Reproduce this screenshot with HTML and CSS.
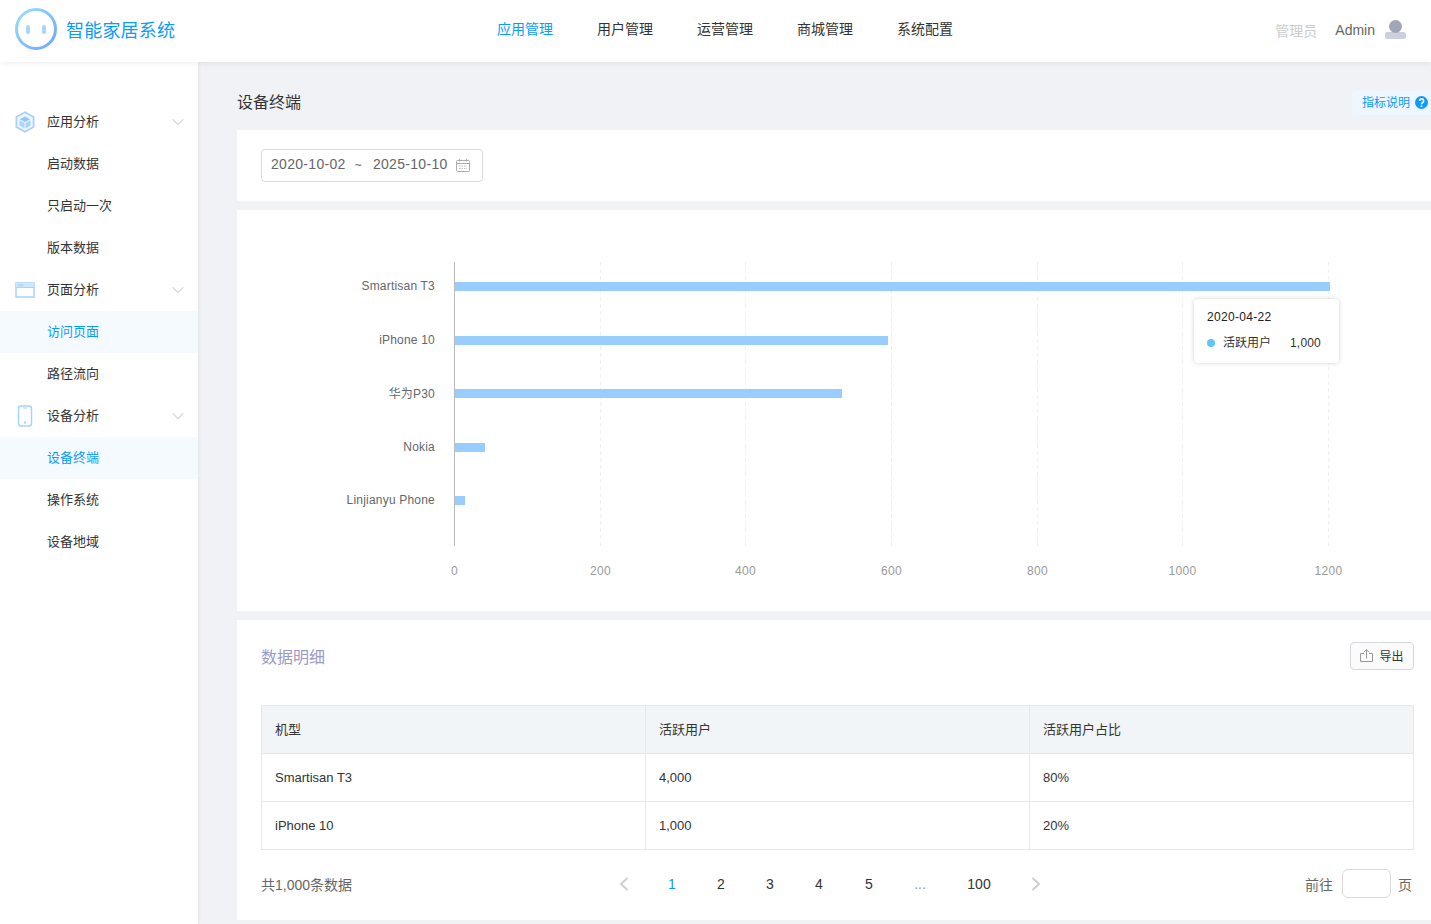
FILE: index.html
```html
<!DOCTYPE html>
<html lang="zh-CN">
<head>
<meta charset="utf-8">
<title>智能家居系统</title>
<link rel="stylesheet" href="styles.css">
</head>
<body>
<header class="topbar">
  <div class="brand">
    <svg class="brand-logo" width="44" height="44" viewBox="0 0 44 44">
      <defs><linearGradient id="lg" x1="0" y1="0" x2="1" y2="1"><stop offset="0" stop-color="#9be0ff"/><stop offset="1" stop-color="#6aa5ff"/></linearGradient></defs>
      <circle cx="22" cy="22" r="19.5" fill="none" stroke="url(#lg)" stroke-width="3"/>
      <rect x="12" y="18" width="4" height="9" rx="2" fill="#a5d6fb"/>
      <rect x="28" y="18" width="4" height="9" rx="2" fill="#a5d6fb"/>
    </svg>
    <span class="brand-name">智能家居系统</span>
  </div>
  <nav class="topnav">
    <a class="topnav-item is-active">应用管理</a>
    <a class="topnav-item">用户管理</a>
    <a class="topnav-item">运营管理</a>
    <a class="topnav-item">商城管理</a>
    <a class="topnav-item">系统配置</a>
  </nav>
  <div class="account">
    <span class="account-role">管理员</span>
    <span class="account-name">Admin</span>
    <svg width="22" height="22" viewBox="0 0 22 22"><rect x="0" y="13" width="21" height="7" rx="2.5" fill="#ccd0de"/><circle cx="10.500" cy="7.500" r="6.500" fill="#a1a5ba"/></svg>
  </div>
</header>
<div class="shell">
  <aside class="sidebar">
    <div class="menu-row menu-group">
      <svg class="menu-icon" width="20" height="22" viewBox="0 0 20 22"><path d="M10 1.2 18.6 6v10L10 20.8 1.400 16V6Z" fill="#eef6ff" stroke="#a6d2ff" stroke-width="1.800"/><path d="M10 5.500 15.200 8.300 10 11 4.800 8.300Z" fill="#8fc6ff"/><path d="M4.500 9.200 9.500 12v5.200L4.500 14.500ZM15.500 9.200 10.500 12v5.200l5-2.700Z" fill="#a9d4ff"/></svg>
      <span>应用分析</span>
      <svg class="chevron" width="12" height="8" viewBox="0 0 14 8"><path d="M1 1l6 6 6-6" fill="none" stroke="#d4d4d4" stroke-width="1.400"/></svg>
    </div>
    <div class="menu-row">启动数据</div>
    <div class="menu-row">只启动一次</div>
    <div class="menu-row">版本数据</div>
    <div class="menu-row menu-group">
      <svg class="menu-icon" width="20" height="16" viewBox="0 0 20 16"><rect x="1" y="1" width="18" height="14" fill="#fff" stroke="#a6d2ff" stroke-width="1.500"/><rect x="1" y="1" width="18" height="4" fill="#cfe6ff"/><path d="M1 5.500h18" stroke="#a6d2ff"/><rect x="3" y="2.500" width="5" height="1.500" fill="#a6d2ff"/></svg>
      <span>页面分析</span>
      <svg class="chevron" width="12" height="8" viewBox="0 0 14 8"><path d="M1 1l6 6 6-6" fill="none" stroke="#d4d4d4" stroke-width="1.400"/></svg>
    </div>
    <div class="menu-row is-active">访问页面</div>
    <div class="menu-row">路径流向</div>
    <div class="menu-row menu-group">
      <svg class="menu-icon" width="20" height="22" viewBox="0 0 20 22"><rect x="3.500" y="1" width="13" height="20" rx="2.500" fill="#fff" stroke="#a6d2ff" stroke-width="1.500"/><path d="M8 3h4" stroke="#a6d2ff"/><circle cx="10" cy="17.500" r="1.200" fill="#a6d2ff"/></svg>
      <span>设备分析</span>
      <svg class="chevron" width="12" height="8" viewBox="0 0 14 8"><path d="M1 1l6 6 6-6" fill="none" stroke="#d4d4d4" stroke-width="1.400"/></svg>
    </div>
    <div class="menu-row is-active">设备终端</div>
    <div class="menu-row">操作系统</div>
    <div class="menu-row">设备地域</div>
  </aside>
  <main class="content">
    <div class="page-head">
      <h1 class="page-title">设备终端</h1>
      <div class="hint">
        <span class="hint-text">指标说明</span>
        <svg width="13" height="13" viewBox="0 0 12 12"><circle cx="6" cy="6" r="6" fill="#0a9bff"/><path d="M4.200 4.600a1.900 1.900 0 1 1 2.700 1.700c-.6.300-.9.600-.9 1.200" fill="none" stroke="#fff" stroke-width="1.500"/><circle cx="6" cy="9.400" r=".9" fill="#fff"/></svg>
      </div>
    </div>
    <section class="card filter-card">
      <div class="date-range">
        <span>2020-10-02</span>
        <span class="date-sep">~</span>
        <span>2025-10-10</span>
        <svg class="date-icon" width="14" height="13" viewBox="0 0 14 13"><rect x=".5" y="1.500" width="13" height="11" rx="1" fill="none" stroke="#aaa"/><path d="M.5 4.500h13M3.500 0v2.500M10.500 0v2.500" stroke="#aaa"/><path d="M3 7h8M3 9.500h8" stroke="#bbb" stroke-dasharray="1.500 1"/></svg>
      </div>
    </section>
    <section class="card chart-card">
      <svg class="chart" width="1201" height="401" viewBox="0 0 1201 401">
        <g class="grid">
          <path d="M363.500 52v284M508.500 52v284M654.500 52v284M800.500 52v284M945.500 52v284M1091.500 52v284"/>
        </g>
        <path d="M217.500 52v284" stroke="#bbb" fill="none"/>
        <g class="bars">
          <rect x="218" y="72" width="875" height="9"/>
          <rect x="218" y="126" width="433" height="9"/>
          <rect x="218" y="179" width="387" height="9"/>
          <rect x="218" y="233" width="30" height="9"/>
          <rect x="218" y="286" width="10" height="9"/>
        </g>
        <g class="y-labels">
          <text x="198" y="80">Smartisan T3</text>
          <text x="198" y="134">iPhone 10</text>
          <text x="198" y="188">华为P30</text>
          <text x="198" y="241">Nokia</text>
          <text x="198" y="294">Linjianyu Phone</text>
        </g>
        <g class="x-labels">
          <text x="217.500" y="365">0</text>
          <text x="363.500" y="365">200</text>
          <text x="508.500" y="365">400</text>
          <text x="654.500" y="365">600</text>
          <text x="800.500" y="365">800</text>
          <text x="945.500" y="365">1000</text>
          <text x="1091.500" y="365">1200</text>
        </g>
      </svg>
      <div class="tooltip">
        <div class="tooltip-date">2020-04-22</div>
        <div class="tooltip-row">
          <i class="tooltip-dot"></i>
          <span>活跃用户</span>
          <span class="tooltip-value">1,000</span>
        </div>
      </div>
    </section>
    <section class="card table-card">
      <div class="table-head">
        <h2 class="table-title">数据明细</h2>
        <button class="export-btn">
          <svg width="13" height="13" viewBox="0 0 13 13"><path d="M4 4.500H.5v8h12v-8H9M6.500 9.500V.8M3.800 3.300 6.500.6l2.700 2.700" fill="none" stroke="#999"/></svg>
          <span>导出</span>
        </button>
      </div>
      <table class="data-table">
        <thead>
          <tr><th>机型</th><th>活跃用户</th><th>活跃用户占比</th></tr>
        </thead>
        <tbody>
          <tr><td>Smartisan T3</td><td>4,000</td><td>80%</td></tr>
          <tr><td>iPhone 10</td><td>1,000</td><td>20%</td></tr>
        </tbody>
      </table>
      <div class="table-foot">
        <span class="total">共1,000条数据</span>
        <div class="pager">
          <span class="pager-arrow"><svg width="10" height="14" viewBox="0 0 10 14"><path d="M8.500 1l-6.500 6 6.500 6" fill="none" stroke="#ccc" stroke-width="1.800"/></svg></span>
          <span class="pager-item is-active">1</span>
          <span class="pager-item">2</span>
          <span class="pager-item">3</span>
          <span class="pager-item">4</span>
          <span class="pager-item pager-five">5</span>
          <span class="pager-item pager-dots">...</span>
          <span class="pager-item pager-last">100</span>
          <span class="pager-arrow pager-next"><svg width="10" height="14" viewBox="0 0 10 14"><path d="M1.500 1l6.500 6-6.500 6" fill="none" stroke="#ccc" stroke-width="1.800"/></svg></span>
        </div>
        <div class="jump">
          <span>前往</span>
          <span class="jump-input"></span>
          <span>页</span>
        </div>
      </div>
    </section>
  </main>
</div>
</body>
</html>
```

FILE: styles.css
```css
* { box-sizing: border-box; }
html, body { margin: 0; height: 100%; overflow: hidden; }
body {
  width: 1431px;
  height: 924px;
  background: #f0f2f6;
  color: #333;
  font-family: "Liberation Sans", "Noto Sans CJK SC", sans-serif;
  font-size: 14px;
}
.topbar {
  position: relative;
  z-index: 2;
  height: 62px;
  padding-bottom: 4px;
  display: flex;
  align-items: center;
  background: #fff;
  box-shadow: 0 1px 6px rgba(0, 0, 0, .08);
}
.brand { width: 497px; padding-left: 14px; display: flex; align-items: center; gap: 8px; }
.brand-name { font-size: 18px; color: #0a9bff; letter-spacing: .2px; }
.topnav { display: flex; gap: 44px; }
.topnav-item { color: #333; line-height: 20px; }
.topnav-item.is-active { color: #0a9bff; }
.account { margin-left: auto; padding: 2px 24px 0 0; display: flex; align-items: center; }
.account-role { color: #ccc; margin-right: 18px; }
.account-name { color: #666; margin-right: 10px; }
.shell { display: flex; height: 862px; }
.sidebar {
  width: 198px;
  flex: none;
  padding-top: 39px;
  background: #fff;
  box-shadow: 1px 0 4px rgba(0, 0, 0, .06);
}
.menu-row {
  height: 42px;
  padding-bottom: 4px;
  display: flex;
  align-items: center;
  padding-left: 47px;
  font-size: 13px;
  color: #333;
}
.menu-row.is-active { background: #f4faff; color: #0a9bff; }
.menu-group { padding-left: 15px; }
.menu-icon { width: 20px; margin-right: 12px; margin-top: 4px; flex: none; }
.chevron { margin-left: auto; margin-right: 14px; margin-top: 4px; }
.content { flex: none; width: 1201px; margin-left: 39px; }
.page-head { height: 68px; display: flex; align-items: center; justify-content: space-between; padding-top: 9px; }
.page-title { margin: 0; font-size: 16px; font-weight: 400; color: #333; }
.hint {
  height: 24px;
  margin-top: 4px;
  margin-right: 7px;
  width: 79px;
  padding: 0 3px 0 10px;
  display: flex;
  align-items: center;
  justify-content: space-between;
  background: #eef6ff;
  border-radius: 4px 0 0 4px;
  font-size: 12px;
  color: #0a9bff;
}
.hint-text { margin-bottom: 2px; }
.card { background: #fff; }
.filter-card { height: 71px; padding: 19px 24px 0; }
.date-range {
  width: 222px;
  height: 33px;
  padding: 0 12px 4px 9px;
  display: flex;
  align-items: center;
  border: 1px solid #d9d9d9;
  border-radius: 4px;
  color: #666;
  letter-spacing: .3px;
}
.date-sep { font-size: 12px; margin: 2px 11px 0 9px; }
.date-icon { margin-left: auto; margin-top: 4px; }
.chart-card { position: relative; height: 401px; margin-top: 9px; }
.chart { display: block; }
.grid path { stroke: #efefef; fill: none; stroke-dasharray: 4 3; }
.bars rect { fill: #99ccff; }
.y-labels text { font-size: 12px; fill: #666; text-anchor: end; letter-spacing: .2px; }
.x-labels text { font-size: 12px; fill: #999; text-anchor: middle; letter-spacing: .3px; }
.tooltip {
  position: absolute;
  left: 957px;
  top: 89px;
  width: 145px;
  height: 64px;
  padding: 10px 13px 0;
  background: #fff;
  border-radius: 4px;
  box-shadow: 0 0 5px rgba(0, 0, 0, .18);
  font-size: 12px;
  color: #333;
}
.tooltip-date { line-height: 16px; color: #222; letter-spacing: .3px; }
.tooltip-row { display: flex; align-items: center; margin-top: 10px; line-height: 16px; }
.tooltip-dot { width: 8px; height: 8px; border-radius: 50%; background: #62c4ff; margin-right: 8px; }
.tooltip-value { margin-left: auto; margin-right: 5px; letter-spacing: .2px; }
.table-card { height: 300px; margin-top: 9px; padding: 0 24px; }
.table-head { height: 85px; display: flex; align-items: center; justify-content: space-between; padding-bottom: 14px; }
.table-title { margin: 0; font-size: 16px; font-weight: 400; color: #9a9ac8; }
.export-btn {
  width: 64px;
  height: 28px;
  padding: 0;
  display: flex;
  align-items: center;
  justify-content: center;
  gap: 6px;
  border: 1px solid #d4d8dc;
  border-radius: 4px;
  background: #fbfbfb;
  font: inherit;
  font-size: 12px;
  color: #333;
}
.data-table { width: 1153px; border-collapse: collapse; table-layout: fixed; font-size: 13px; }
.data-table th, .data-table td {
  height: 48px;
  padding: 0 13px;
  border: 1px solid #e4e9ef;
  text-align: left;
  font-weight: 400;
  color: #333;
}
.data-table th { background: #f2f5f8; padding-bottom: 2px; }
.table-foot { display: flex; align-items: center; height: 70px; padding-bottom: 3px; }
.total { width: 339.500px; font-size: 14px; color: #666; }
.pager { display: flex; align-items: center; }
.pager-arrow { width: 47px; display: flex; justify-content: center; }
.pager-next { width: 45px; }
.pager-item { width: 49px; text-align: center; color: #333; }
.pager-item.is-active { color: #0a9bff; }
.pager-five { margin-left: 1px; }
.pager-dots { color: #999; margin-left: 2px; }
.pager-last { width: 69px; }
.jump { margin-left: auto; margin-right: 2px; display: flex; align-items: center; color: #666; }
.jump-input { width: 49px; height: 29px; margin: 0 7px 1px 9px; border: 1px solid #d9d9d9; border-radius: 6px; background: #fff; }
```
